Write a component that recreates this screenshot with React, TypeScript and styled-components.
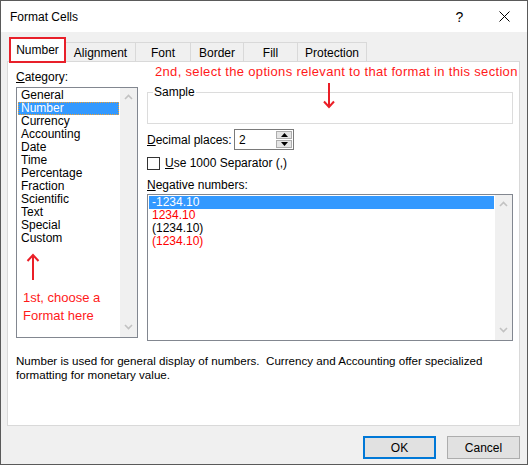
import styled, { createGlobalStyle } from 'styled-components';

const GlobalStyle = createGlobalStyle`
  html, body {
    margin: 0;
    padding: 0;
    background: #fff;
  }
  body {
    font-family: 'Liberation Sans', Arial, sans-serif;
    font-size: 12px;
    color: #000;
  }
  * {
    box-sizing: border-box;
  }
`;

const categories = [
  'General',
  'Number',
  'Currency',
  'Accounting',
  'Date',
  'Time',
  'Percentage',
  'Fraction',
  'Scientific',
  'Text',
  'Special',
  'Custom',
];

const negatives = [
  { label: '-1234.10', red: false },
  { label: '1234.10', red: true },
  { label: '(1234.10)', red: false },
  { label: '(1234.10)', red: true },
];

const tabs = ['Number', 'Alignment', 'Font', 'Border', 'Fill', 'Protection'];
const tabWidths = [57, 70, 55, 53, 54, 69];

const Chevron = ({ down }: { down?: boolean }) => (
  <svg width="9" height="6" viewBox="0 0 9 6">
    <path
      d={down ? 'M1 1 L4.5 4.5 L8 1' : 'M1 5 L4.5 1.5 L8 5'}
      fill="none"
      stroke="#c2c2c2"
      strokeWidth="1.6"
    />
  </svg>
);

const Scroll = () => (
  <ScrollBar>
    <Chevron />
    <Chevron down />
  </ScrollBar>
);

const App = () => {
  return (
    <>
      <GlobalStyle />
      <Window>
        <TitleBar>
          <Title>Format Cells</Title>
          <TitleButton>?</TitleButton>
          <TitleButton>
            <svg width="11" height="11" viewBox="0 0 11 11">
              <path d="M0.5 0.5 L10.5 10.5 M10.5 0.5 L0.5 10.5" stroke="#000" strokeWidth="1" />
            </svg>
          </TitleButton>
        </TitleBar>
        <Body>
          <TabStrip>
            {tabs.map((t, i) => (
              <Tab key={t} $active={i === 0} style={{ width: tabWidths[i] }}>
                {t}
              </Tab>
            ))}
          </TabStrip>
          <Panel>
            <Columns>
              <LeftColumn>
                <FieldLabel>
                  <u>C</u>ategory:
                </FieldLabel>
                <CategoryList>
                  <Items>
                    {categories.map((c) => (
                      <Item key={c} $selected={c === 'Number'} $focus={c === 'Number'}>
                        {c}
                      </Item>
                    ))}
                    <UpArrow>
                      <svg width="20" height="28" viewBox="0 0 20 28">
                        <path
                          d="M10 27 L10 2 M4.5 8 L10 2 L15.5 8"
                          fill="none"
                          stroke="#ea1f27"
                          strokeWidth="2"
                        />
                      </svg>
                    </UpArrow>
                    <NoteText>
                      1st, choose a
                      <br />
                      Format here
                    </NoteText>
                  </Items>
                  <Scroll />
                </CategoryList>
              </LeftColumn>
              <RightColumn>
                <TopNote>2nd, select the options relevant to that format in this section</TopNote>
                <DownArrow>
                  <svg width="12" height="26" viewBox="0 0 12 26">
                    <path
                      d="M6 0 L6 24 M1 18.5 L6 24 L11 18.5"
                      fill="none"
                      stroke="#ea1f27"
                      strokeWidth="2"
                    />
                  </svg>
                </DownArrow>
                <SampleBox>
                  <legend>Sample</legend>
                  <SampleBody />
                </SampleBox>
                <DecimalRow>
                  <DecimalLabel>
                    <u>D</u>ecimal places:
                  </DecimalLabel>
                  <SpinInput>
                    <span>2</span>
                    <SpinButtons>
                      <SpinButton>
                        <svg width="7" height="4" viewBox="0 0 7 4">
                          <path d="M0 4 L3.5 0 L7 4 Z" fill="#000" />
                        </svg>
                      </SpinButton>
                      <SpinButton>
                        <svg width="7" height="4" viewBox="0 0 7 4">
                          <path d="M0 0 L3.5 4 L7 0 Z" fill="#000" />
                        </svg>
                      </SpinButton>
                    </SpinButtons>
                  </SpinInput>
                </DecimalRow>
                <CheckRow>
                  <CheckBox />
                  <span>
                    <u>U</u>se 1000 Separator (,)
                  </span>
                </CheckRow>
                <NegLabel>
                  <u>N</u>egative numbers:
                </NegLabel>
                <NegativeList>
                  <Items>
                    {negatives.map((n, i) => (
                      <Item key={i} $selected={i === 0} $red={n.red}>
                        {n.label}
                      </Item>
                    ))}
                  </Items>
                  <Scroll />
                </NegativeList>
              </RightColumn>
            </Columns>
            <Description>
              {'Number is used for general display of numbers.  Currency and Accounting offer specialized'}
              <br />
              formatting for monetary value.
            </Description>
          </Panel>
          <Footer>
            <DialogButton $default>OK</DialogButton>
            <DialogButton>Cancel</DialogButton>
          </Footer>
        </Body>
      </Window>
    </>
  );
};

export default App;

const Window = styled.div`
  width: 528px;
  height: 465px;
  border: 1px solid #5a5a5a;
  display: flex;
  flex-direction: column;
  background: #f0f0f0;
`;

const TitleBar = styled.div`
  height: 31px;
  flex-shrink: 0;
  background: #fff;
  display: flex;
  align-items: center;
  padding-left: 9px;
`;

const Title = styled.span`
  flex: 1;
  font-size: 12px;
`;

const TitleButton = styled.div`
  width: 45px;
  height: 31px;
  display: flex;
  align-items: center;
  justify-content: center;
  font-size: 14px;
`;

const Body = styled.div`
  flex: 1;
  display: flex;
  flex-direction: column;
  padding: 5px 7px 0 6px;
`;

const TabStrip = styled.div`
  height: 24px;
  display: flex;
  align-items: flex-end;
  padding-left: 2px;
  position: relative;
  z-index: 1;
`;

const Tab = styled.div<{ $active?: boolean }>`
  height: ${(p) => (p.$active ? '26px' : '19px')};
  margin-bottom: ${(p) => (p.$active ? '-2px' : '0')};
  display: flex;
  align-items: center;
  justify-content: center;
  background: ${(p) => (p.$active ? '#fff' : '#f0f0f0')};
  border: ${(p) => (p.$active ? '2px solid #e8202a' : '1px solid #d9d9d9')};
  border-bottom: ${(p) => (p.$active ? '2px solid #e8202a' : 'none')};
  padding-top: ${(p) => (p.$active ? '0' : '1px')};

  & + & {
    border-left: none;
  }
`;

const Panel = styled.div`
  height: 365px;
  background: #fff;
  border: 1px solid #d9d9d9;
  padding-left: 8px;
  display: flex;
  flex-direction: column;
`;

const Columns = styled.div`
  display: flex;
  gap: 9px;
`;

const LeftColumn = styled.div`
  width: 122px;
  display: flex;
  flex-direction: column;
`;

const RightColumn = styled.div`
  width: 366px;
  display: flex;
  flex-direction: column;
  position: relative;
`;

const FieldLabel = styled.div`
  margin-top: 8px;
  line-height: 14px;
`;

const ListBox = styled.div`
  border: 1px solid #828790;
  display: flex;
  background: #fff;
`;

const CategoryList = styled(ListBox)`
  margin-top: 3px;
  height: 251px;
`;

const NegativeList = styled(ListBox)`
  margin-top: 2px;
  height: 147px;
`;

const Items = styled.div`
  flex: 1;
  padding: 1px;
  display: flex;
  flex-direction: column;
`;

const Item = styled.div<{ $selected?: boolean; $focus?: boolean; $red?: boolean }>`
  height: 13px;
  line-height: 13px;
  padding-left: 3px;
  white-space: nowrap;
  color: ${(p) => (p.$selected ? '#fff' : p.$red ? '#ff0000' : '#000')};
  background: ${(p) => (p.$selected ? '#3399ff' : 'transparent')};
  outline: ${(p) => (p.$focus ? '1px dotted #f0a030' : 'none')};
  outline-offset: -1px;
`;

const ScrollBar = styled.div`
  width: 17px;
  background: #f0f0f0;
  display: flex;
  flex-direction: column;
  justify-content: space-between;
  align-items: center;
  padding: 6px 0 7px;
`;

const UpArrow = styled.div`
  margin-top: 8px;
  padding-left: 5px;
  height: 28px;
`;

const NoteText = styled.div`
  margin-top: 8px;
  padding-left: 5px;
  font-size: 13px;
  line-height: 18px;
  color: #ff1a1a;
`;

const TopNote = styled.div`
  margin-top: 2px;
  padding-left: 8px;
  line-height: 16px;
  font-size: 13px;
  letter-spacing: 0.32px;
  white-space: nowrap;
  color: #ff1a1a;
`;

const DownArrow = styled.div`
  position: absolute;
  left: 176px;
  top: 21px;
  height: 26px;
  z-index: 1;
`;

const SampleBox = styled.fieldset`
  margin: 5px 0 0;
  padding: 0 0 0 5px;
  border: 1px solid #dcdcdc;
  min-width: 0;

  legend {
    padding: 0 1px;
    line-height: 14px;
    font-size: 12px;
  }
`;

const SampleBody = styled.div`
  height: 24px;
`;

const DecimalRow = styled.div`
  margin-top: 5px;
  display: flex;
  align-items: center;
`;

const DecimalLabel = styled.div`
  width: 87px;
`;

const SpinInput = styled.div`
  width: 60px;
  height: 21px;
  border: 1px solid #7a7a7a;
  display: flex;
  align-items: center;
  padding-left: 4px;
  padding-right: 1px;

  span {
    flex: 1;
  }
`;

const SpinButtons = styled.div`
  width: 16px;
  height: 17px;
  display: flex;
  flex-direction: column;
  gap: 1px;
`;

const SpinButton = styled.div`
  flex: 1;
  background: #e5e5e5;
  border: 1px solid #adadad;
  display: flex;
  align-items: center;
  justify-content: center;
`;

const CheckRow = styled.div`
  margin-top: 7px;
  display: flex;
  align-items: center;
  gap: 5px;
  line-height: 13px;
`;

const CheckBox = styled.div`
  width: 13px;
  height: 13px;
  border: 1px solid #333;
  background: #fff;
`;

const NegLabel = styled.div`
  margin-top: 8px;
  line-height: 14px;
`;

const Description = styled.div`
  margin-top: 13px;
  line-height: 14px;
  font-size: 11.6px;
  white-space: pre;
`;

const Footer = styled.div`
  margin-top: 10px;
  display: flex;
  justify-content: flex-end;
  gap: 11px;
`;

const DialogButton = styled.div<{ $default?: boolean }>`
  width: 73px;
  height: 23px;
  display: flex;
  align-items: center;
  justify-content: center;
  background: #e1e1e1;
  border: ${(p) => (p.$default ? '2px solid #0078d7' : '1px solid #adadad')};
`;
